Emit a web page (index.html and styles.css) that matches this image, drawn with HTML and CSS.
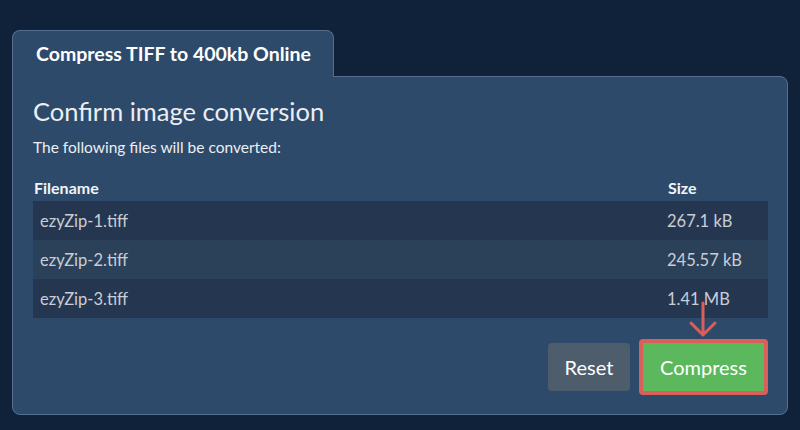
FILE: index.html
```html
<!DOCTYPE html>
<html lang="en">
<head>
<meta charset="utf-8">
<title>Compress TIFF to 400kb Online</title>
<link rel="stylesheet" href="styles.css">
</head>
<body>
<div class="card">
  <div class="tab">Compress TIFF to 400kb Online</div>
  <div class="panel">
    <h2 class="title">Confirm image conversion</h2>
    <p class="sub">The following files will be converted:</p>
    <div class="table">
      <div class="head">
        <div class="hcell">Filename</div>
        <div class="hcell">Size</div>
      </div>
      <div class="row dark">
        <div class="name">ezyZip-1.tiff</div>
        <div class="size">267.1 kB</div>
      </div>
      <div class="row mid">
        <div class="name">ezyZip-2.tiff</div>
        <div class="size">245.57 kB</div>
      </div>
      <div class="row dark">
        <div class="name">ezyZip-3.tiff</div>
        <div class="size">1.41 MB</div>
      </div>
    </div>
    <div class="actions">
      <button class="btn reset">Reset</button>
      <div class="highlight">
        <button class="btn compress">Compress</button>
        <svg class="arrow" width="30" height="40" viewBox="0 0 30 40">
          <path d="M15 2 V34 M3 22 L15 34 L27 22" fill="none" stroke="#d9605a" stroke-width="3" stroke-linecap="round" stroke-linejoin="round"/>
        </svg>
      </div>
    </div>
  </div>
</div>
</body>
</html>
```
FILE: styles.css
```css
* { box-sizing: border-box; }
html, body { margin: 0; padding: 0; }
body {
  background: #10223a;
  font-family: Lato, "Open Sans", sans-serif;
  color: #eef0f3;
  width: 800px;
  height: 430px;
  overflow: hidden;
}
.card {
  margin: 30px 0 0 12px;
  width: 776px;
}
.tab {
  display: inline-block;
  position: relative;
  z-index: 1;
  width: 322px;
  height: 47px;
  margin-bottom: -1px;
  padding: 12px 0 0 23px;
  background: #2d4a6b;
  border: 1px solid #566f8e;
  border-bottom: none;
  border-radius: 8px 8px 0 0;
  font-size: 19.5px;
  line-height: 22px;
  font-weight: 700;
  color: #ffffff;
}
.panel {
  background: #2d4a6b;
  border: 1px solid #566f8e;
  border-radius: 0 8px 8px 8px;
  padding: 19px 19px 19px 20px;
}
.title {
  margin: 0;
  font-size: 25.5px;
  line-height: 31px;
  font-weight: 400;
  color: #eceef1;
}
.sub {
  margin: 10px 0 0;
  font-size: 15.5px;
  line-height: 20px;
  color: #eceef1;
}
.table {
  margin-top: 21px;
}
.head, .row {
  display: grid;
  grid-template-columns: 634px 1fr;
}
.head {
  padding-bottom: 3px;
}
.hcell {
  padding-left: 1px;
  font-size: 16px;
  line-height: 20px;
  font-weight: 700;
  color: #f2f4f6;
}
.row {
  height: 39px;
  align-items: center;
  font-size: 16.5px;
  color: #c9ced6;
}
.row.dark { background: #253750; }
.row.mid { background: #2b4159; }
.name { padding-left: 7px; }
.actions {
  display: flex;
  justify-content: flex-end;
  align-items: center;
  gap: 9px;
  margin-top: 21px;
}
.btn {
  font-family: Lato, "Open Sans", sans-serif;
  font-size: 20px;
  color: #ffffff;
  border: none;
  border-radius: 4px;
  height: 48px;
  padding: 0;
}
.reset {
  width: 82px;
  background: #4e5d6c;
}
.highlight {
  position: relative;
  border: 4px solid #d9605a;
  border-radius: 4px;
}
.compress {
  display: block;
  width: 121px;
  background: #5cb85c;
  border-radius: 0;
}
.arrow {
  position: absolute;
  left: 45px;
  top: -42px;
}
```
